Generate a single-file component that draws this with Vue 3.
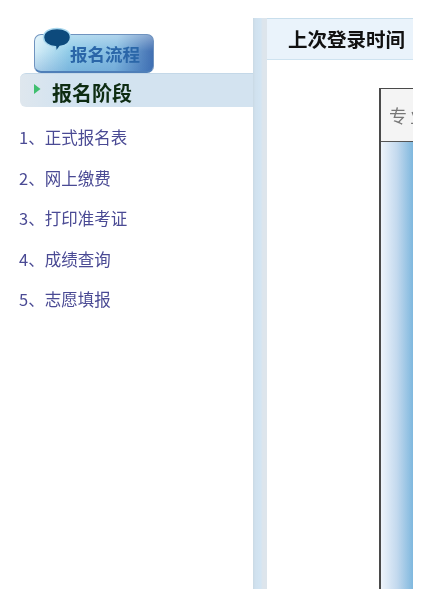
<script setup>
const steps = ['1、正式报名表', '2、网上缴费', '3、打印准考证', '4、成绩查询', '5、志愿填报']
</script>

<template>
  <div class="page">
    <aside class="side">
      <div class="logo">
        <svg class="bubble" width="30" height="28" viewBox="0 0 30 28">
          <path d="M15 1.500C23 1.500 28.500 5 28.500 10.500C28.500 15.500 24 18.500 18 19.500L14 25L13.500 19.800C6.500 19 1.500 15.500 1.500 10.500C1.500 5 7 1.500 15 1.500Z" fill="#0d4a7c" stroke="#a9d8ee" stroke-width="1.500"/>
        </svg>
        <span class="logo-text">报名流程</span>
      </div>
      <div class="stage">
        <svg class="arrow" width="8" height="12" viewBox="0 0 8 12"><path d="M1 1L7.500 6L1 11Z" fill="#3fbf6f"/></svg>
        <span>报名阶段</span>
      </div>
      <ul class="steps">
        <li v-for="s in steps" :key="s">{{ s }}</li>
      </ul>
    </aside>
    <div class="split"></div>
    <main class="main">
      <div class="head">上次登录时间</div>
      <div class="body">
        <div class="table">
          <div class="th">专业</div>
          <div class="td"></div>
        </div>
      </div>
    </main>
  </div>
</template>

<style>
html, body { margin: 0; background: #fff; }
</style>

<style scoped>
.page {
  display: flex;
  width: 413px;
  height: 571px;
  margin-top: 18px;
  font-family: "Noto Sans CJK SC", "Liberation Sans", sans-serif;
  overflow: hidden;
  filter: blur(0.35px);
}
.side { width: 253px; flex: none; padding-top: 16px; box-sizing: border-box; }
.logo {
  position: relative;
  box-sizing: border-box;
  width: 120px;
  height: 39px;
  margin-left: 34px;
  border-radius: 7px;
  border: 1px solid #6f93bf;
  border-bottom: 2px solid #4f7fb8;
  background:
    linear-gradient(180deg, rgba(255,255,255,0.35) 0%, rgba(255,255,255,0) 45%, rgba(60,120,190,0.25) 100%),
    linear-gradient(95deg, #d8eff8 0%, #8fcbe8 30%, #86bde2 68%, #3f6cb0 100%);
  display: flex;
  align-items: center;
  justify-content: flex-end;
  padding-right: 13px;
}
.bubble { position: absolute; left: 7px; top: -8px; }
.logo-text {
  font-family: "Noto Sans CJK SC", sans-serif;
  font-size: 17.500px;
  font-weight: 700;
  color: #2a66a8;
  line-height: 1;
  margin-top: 1px;
}
.stage {
  height: 34px;
  margin-left: 20px;
  box-sizing: border-box;
  border-radius: 6px 0 0 6px;
  background: linear-gradient(90deg, #dfe7ee 0, #d3e3f0 40px);
  border-top: 1px solid #c4d8e8;
  display: flex;
  align-items: center;
  font-size: 20px;
  font-weight: 700;
  color: #0e2c12;
  padding-left: 13px;
}
.stage span { margin-top: 5px; line-height: 28px; }
.arrow { margin-right: 11px; margin-top: -3px; }
.steps {
  list-style: none;
  margin: 0;
  padding: 10px 0 0 19px;
  font-size: 16.500px;
  color: #4a4a94;
}
.steps li {
  height: 40.500px;
  line-height: 40.500px;
  white-space: nowrap;
}
.split {
  width: 14px;
  flex: none;
  background: linear-gradient(90deg, #c9d9e4 0, #d0e1ee 15%, #d3e5f3 55%, #dde5ec 70%, #dde5ec 100%);
}
.main { flex: 1; min-width: 0; display: flex; flex-direction: column; }
.head {
  height: 42px;
  box-sizing: border-box;
  flex: none;
  background: #eaf3fb;
  border-top: 1px solid #c8deec;
  border-bottom: 1px solid #cfe3f0;
  padding-left: 21px;
  line-height: 40px;
  font-size: 19.500px;
  font-weight: 700;
  color: #111;
  white-space: nowrap;
}
.body { flex: 1; padding: 28px 0 0 112px; min-height: 0; display: flex; }
.table {
  flex: 1;
  min-width: 0;
  border: solid #4a4a4a;
  border-width: 1px 0 0 2px;
  display: flex;
  flex-direction: column;
  overflow: hidden;
}
.th {
  height: 53px;
  flex: none;
  box-sizing: border-box;
  background: #f4f4f4;
  border-bottom: 1px solid #555;
  padding-left: 8px;
  line-height: 52px;
  font-size: 18px;
  letter-spacing: 3px;
  color: #777;
  white-space: nowrap;
}
.td { flex: 1; background: linear-gradient(90deg, #eef4fb 0%, #c3d9ee 50%, #7fb8de 100%); }
</style>
